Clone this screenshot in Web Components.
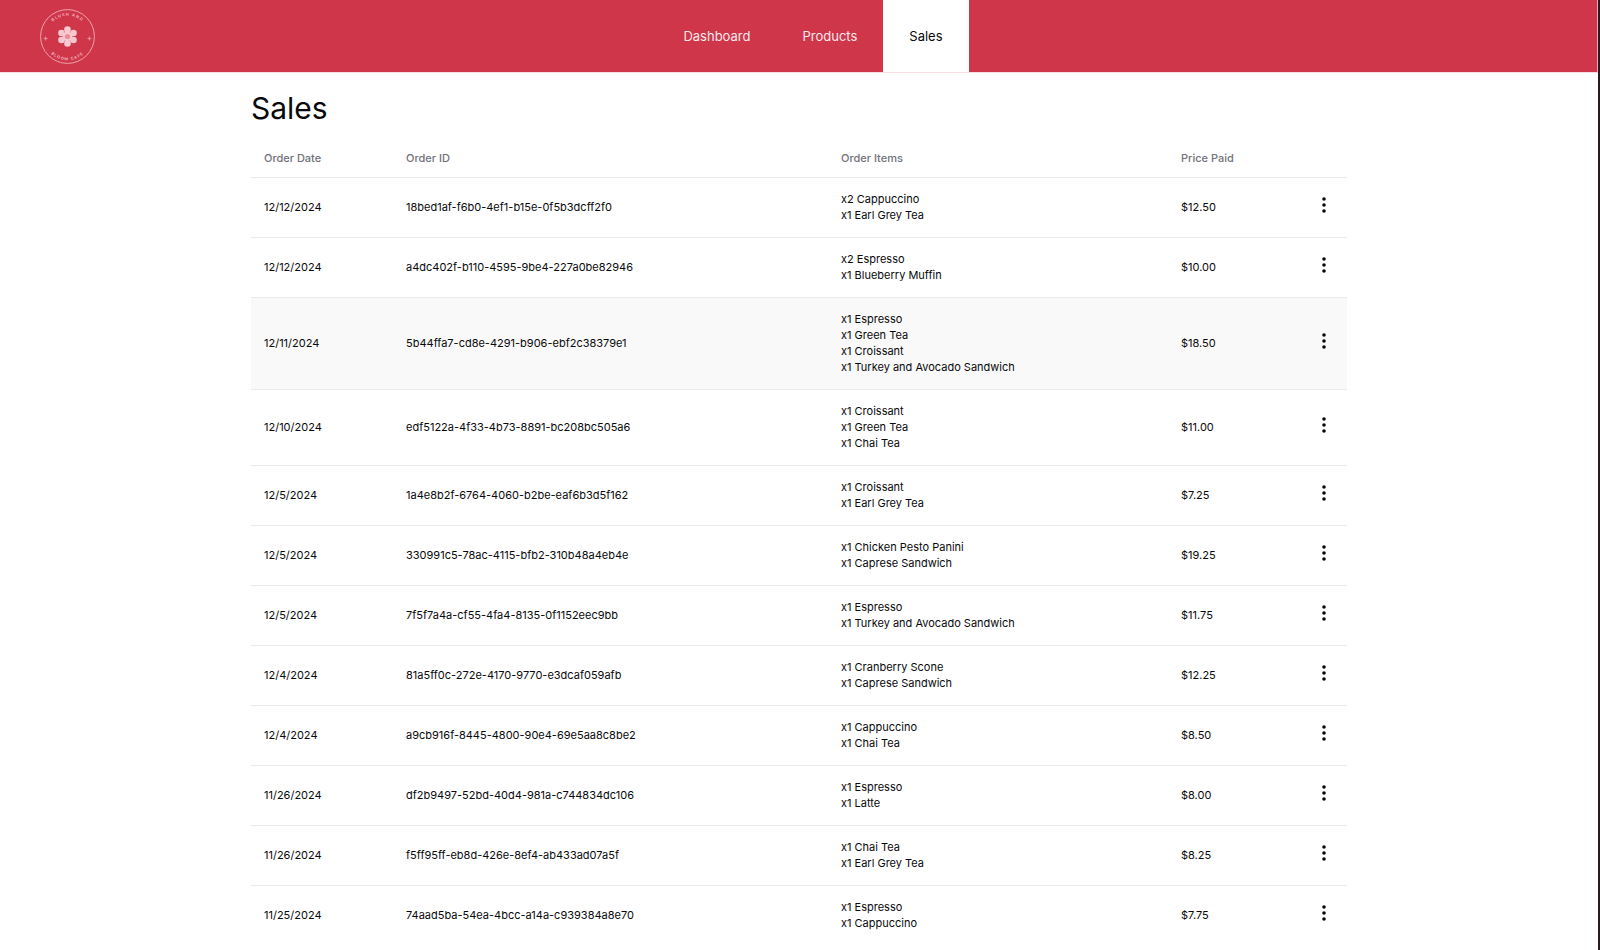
<!DOCTYPE html>
<html lang="en">
<head>
<meta charset="utf-8">
<title>Sales</title>
<style>
html{overflow:hidden;background:#281a1e}
body{margin:0 2px 0 0;min-height:100vh;background:#fff;color:#09090b;font:11px/16px Inter,sans-serif}
</style>
</head>
<body>
<cafe-header>
  <cafe-logo slot="logo"></cafe-logo>
  <nav-item href="#dashboard">Dashboard</nav-item>
  <nav-item href="#products">Products</nav-item>
  <nav-item href="#sales" current>Sales</nav-item>
</cafe-header>
<sales-page><span slot="title">Sales</span><sales-table></sales-table></sales-page>
<script>
const define = (name, html, setup) => {
  const template = document.createElement('template');
  template.innerHTML = html;
  customElements.define(name, class extends HTMLElement {
    connectedCallback() {
      if (this.shadowRoot) return;
      this.attachShadow({mode: 'open'}).append(template.content.cloneNode(true));
      if (setup) setup(this, this.shadowRoot);
    }
  });
};

define('cafe-header', `
<style>
:host{display:block}
header{display:flex;align-items:stretch;height:72px;padding:0 66px 0 40px;background:#cf364a;border-bottom:1px solid #fbdde2;border-right:1px solid #eda9b3}
.logo{display:flex;align-items:center}
nav{display:flex;margin:0 auto}
</style>
<header><div class="logo"><slot name="logo"></slot></div><nav aria-label="Main"><slot></slot></nav></header>`);

define('nav-item', `
<style>
:host{display:flex}
a{display:flex;align-items:center;padding:0 26px;color:#fce9ec;font-size:13px;line-height:20px;text-decoration:none}
:host([current]) a{background:#fff;color:#09090b}
</style>
<a><slot></slot></a>`, (host, root) => {
  const a = root.querySelector('a');
  a.href = host.getAttribute('href');
  if (host.hasAttribute('current')) a.setAttribute('aria-current', 'page');
});

define('cafe-logo', `
<style>
:host{display:block;width:55px;height:55px}
svg{display:block;width:55px;height:55px}
text{font:600 4px Inter,sans-serif;letter-spacing:1px;fill:#f3bfc6}
</style>
<svg viewBox="0 0 55 55" role="img" aria-label="Blush and Bloom Cafe">
  <defs>
    <path id="top" d="M6.7 27.5a20.8 20.8 0 0 1 41.6 0"/>
    <path id="bottom" d="M3.7 27.5a23.8 23.8 0 0 0 47.6 0"/>
  </defs>
  <circle cx="27.5" cy="27.5" r="26.9" fill="none" stroke="#eda4ae"/>
  <text text-anchor="middle"><textPath href="#top" startOffset="50%">BLUSH AND</textPath></text>
  <text text-anchor="middle"><textPath href="#bottom" startOffset="50%">BLOOM CAFE</textPath></text>
  <g fill="#f8c9d0">
    <circle cx="27.5" cy="20.6" r="3.3"/><circle cx="33.5" cy="24" r="3.3"/><circle cx="33.5" cy="31" r="3.3"/>
    <circle cx="27.5" cy="34.4" r="3.3"/><circle cx="21.5" cy="31" r="3.3"/><circle cx="21.5" cy="24" r="3.3"/>
    <circle cx="27.5" cy="27.5" r="4.8"/>
  </g>
  <circle cx="27.5" cy="27.5" r="2.6" fill="#e88f93"/>
  <path d="M3.6 29.5l1.5-.5.5-1.5.5 1.5 1.5.5-1.5.5-.5 1.5-.5-1.5zM47.4 29.5l1.5-.5.5-1.5.5 1.5 1.5.5-1.5.5-.5 1.5-.5-1.5z" fill="#e8949d" stroke="#e8949d" stroke-width=".4"/>
</svg>`);

define('sales-page', `
<style>
:host{display:block}
main{max-width:1096px;margin:0 auto;padding:17px 0 0}
h1{margin:0 0 13px;font-size:30px;line-height:36px;font-weight:400}
</style>
<main><h1><slot name="title"></slot></h1><slot></slot></main>`);

define('kebab-menu', `
<style>
:host{display:block}
button{display:block;margin:0 auto;padding:1px 9px 7px;border:0;background:none;color:#09090b;cursor:pointer}
svg{display:block}
</style>
<button type="button" aria-label="Order actions"><svg width="4" height="16" viewBox="0 0 4 16" fill="currentColor"><circle cx="2" cy="2" r="1.8"/><circle cx="2" cy="8" r="1.8"/><circle cx="2" cy="14" r="1.8"/></svg></button>`);

const orders = [
  ['12/12/2024', '18bed1af-f6b0-4ef1-b15e-0f5b3dcff2f0', ['x2 Cappuccino', 'x1 Earl Grey Tea'], '$12.50'],
  ['12/12/2024', 'a4dc402f-b110-4595-9be4-227a0be82946', ['x2 Espresso', 'x1 Blueberry Muffin'], '$10.00'],
  ['12/11/2024', '5b44ffa7-cd8e-4291-b906-ebf2c38379e1', ['x1 Espresso', 'x1 Green Tea', 'x1 Croissant', 'x1 Turkey and Avocado Sandwich'], '$18.50', true],
  ['12/10/2024', 'edf5122a-4f33-4b73-8891-bc208bc505a6', ['x1 Croissant', 'x1 Green Tea', 'x1 Chai Tea'], '$11.00'],
  ['12/5/2024', '1a4e8b2f-6764-4060-b2be-eaf6b3d5f162', ['x1 Croissant', 'x1 Earl Grey Tea'], '$7.25'],
  ['12/5/2024', '330991c5-78ac-4115-bfb2-310b48a4eb4e', ['x1 Chicken Pesto Panini', 'x1 Caprese Sandwich'], '$19.25'],
  ['12/5/2024', '7f5f7a4a-cf55-4fa4-8135-0f1152eec9bb', ['x1 Espresso', 'x1 Turkey and Avocado Sandwich'], '$11.75'],
  ['12/4/2024', '81a5ff0c-272e-4170-9770-e3dcaf059afb', ['x1 Cranberry Scone', 'x1 Caprese Sandwich'], '$12.25'],
  ['12/4/2024', 'a9cb916f-8445-4800-90e4-69e5aa8c8be2', ['x1 Cappuccino', 'x1 Chai Tea'], '$8.50'],
  ['11/26/2024', 'df2b9497-52bd-40d4-981a-c744834dc106', ['x1 Espresso', 'x1 Latte'], '$8.00'],
  ['11/26/2024', 'f5ff95ff-eb8d-426e-8ef4-ab433ad07a5f', ['x1 Chai Tea', 'x1 Earl Grey Tea'], '$8.25'],
  ['11/25/2024', '74aad5ba-54ea-4bcc-a14a-c939384a8e70', ['x1 Espresso', 'x1 Cappuccino'], '$7.75']
];

define('sales-table', `
<style>
:host{display:block}
table{width:100%;table-layout:fixed;border-collapse:separate;border-spacing:0}
.date{width:142px}.items{width:340px}.price{width:133px}.menu{width:46px}
th{padding:11px 13px;text-align:left;font-weight:500;color:#71717a;border-bottom:1px solid #ebebed}
td{padding:13px 13px 14px;vertical-align:middle;border-bottom:1px solid #ebebed}
td:last-child{padding:0}
tr.active td{background:#f9f9f9}
tbody tr:last-child td{border-bottom-color:transparent}
</style>
<table>
<colgroup><col class="date"><col><col class="items"><col class="price"><col class="menu"></colgroup>
<thead><tr><th scope="col">Order Date</th><th scope="col">Order ID</th><th scope="col">Order Items</th><th scope="col">Price Paid</th><th scope="col" aria-label="Actions"></th></tr></thead>
<tbody></tbody>
</table>`, (host, root) => {
  root.querySelector('tbody').innerHTML = orders.map(([date, id, items, price, active]) =>
    `<tr${active ? ' class="active"' : ''}><td>${date}</td><td>${id}</td><td>${items.map(i => `<div>${i}</div>`).join('')}</td><td>${price}</td><td><kebab-menu></kebab-menu></td></tr>`).join('');
});
</script>
</body>
</html>
